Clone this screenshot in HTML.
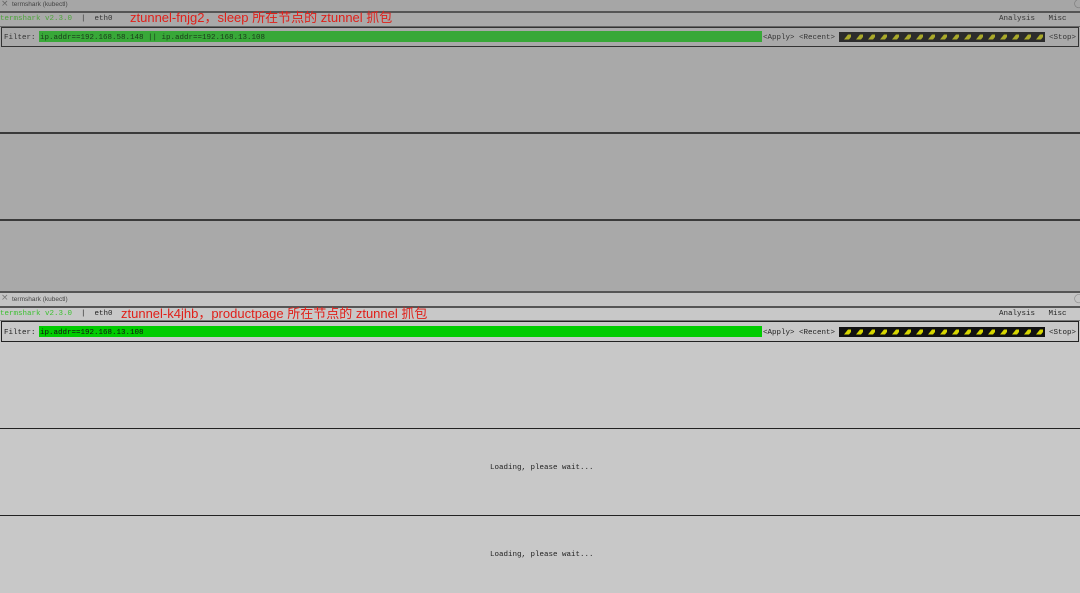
<!DOCTYPE html>
<html><head><meta charset="utf-8"><style>
*{margin:0;padding:0;box-sizing:border-box}
body{width:1080px;height:593px;overflow:hidden;position:relative;background:#c8c8c8;font-family:"Liberation Mono",monospace;font-size:8px;color:#222}
.a{position:absolute}
.mono{font-family:"Liberation Mono",monospace;font-size:7.5px;white-space:pre;line-height:10px}
.cn{font-family:"Liberation Sans","Noto Sans CJK SC",sans-serif;font-size:13px;color:#e0201a;white-space:pre}
.hl{position:absolute;left:0;width:1080px;height:2px}
.ttl{font-family:"Liberation Sans",sans-serif;font-size:6.5px;color:#444;white-space:pre}
</style></head><body>
<div class="a" style="left:0;top:0;width:1080px;height:293px;background:#a9a9a9"></div>
<div class="a" style="left:0;top:0;width:1080px;height:11px;background:#a6a6a6"></div>
<div class="a" style="left:1px;top:-1px;font-size:9px;color:#666;font-family:'DejaVu Sans',sans-serif">×</div>
<div class="a ttl" style="left:12px;top:1px">termshark (kubectl)</div>
<div class="a" style="right:-4px;top:-1px;font-size:9px;color:#777;font-family:'DejaVu Sans',sans-serif">◯</div>
<div class="hl" style="top:11px;background:#555"></div>
<div class="a mono" style="left:0;top:14px;color:#4da53a">termshark v2.3.0</div>
<div class="a mono" style="left:81px;top:14px;color:#333">|  eth0</div>
<div class="a cn" style="left:130px;top:7px">ztunnel-fnjg2，sleep 所在节点的 ztunnel 抓包</div>
<div class="a mono" style="left:999px;top:14px;color:#333">Analysis   Misc</div>
<div class="hl" style="top:26px;height:1px;background:#666"></div>
<div class="a" style="left:1px;top:27px;width:1078px;height:20px;border:1px solid #333"></div>
<div class="a mono" style="left:4px;top:33px;color:#333">Filter:</div>
<div class="a" style="left:39px;top:31px;width:723px;height:11px;background:#38a838"></div>
<div class="a mono" style="left:40px;top:33px;color:#1a3a1a">ip.addr==192.168.58.148 || ip.addr==192.168.13.108</div>
<div class="a mono" style="left:763px;top:33px;color:#333">&lt;Apply&gt; &lt;Recent&gt;</div>
<svg class="a" style="left:839px;top:32px" width="206" height="10"><defs><pattern id="p1" width="12" height="10" patternUnits="userSpaceOnUse"><polygon points="5,7.5 9,2.5 14,2.5 10,7.5" fill="#a9a92a"/></pattern></defs><rect width="206" height="10" fill="#2c2c2c"/><rect width="206" height="10" fill="url(#p1)"/></svg>
<div class="a mono" style="left:1049px;top:33px;color:#333">&lt;Stop&gt;</div>
<div class="hl" style="top:132px;background:#3a3a3a"></div>
<div class="hl" style="top:219px;background:#3a3a3a"></div>
<div class="hl" style="top:291px;height:2px;background:#555"></div>
<div class="a" style="left:0;top:293px;width:1080px;height:13px;background:#c4c4c4"></div>
<div class="a" style="left:1px;top:293px;font-size:9px;color:#777;font-family:'DejaVu Sans',sans-serif">×</div>
<div class="a ttl" style="left:12px;top:296px">termshark (kubectl)</div>
<div class="a" style="right:-4px;top:294px;font-size:9px;color:#888;font-family:'DejaVu Sans',sans-serif">◯</div>
<div class="hl" style="top:306px;background:#555"></div>
<div class="a mono" style="left:0;top:309px;color:#3cc030">termshark v2.3.0</div>
<div class="a mono" style="left:81px;top:309px;color:#222">|  eth0</div>
<div class="a cn" style="left:121px;top:303px">ztunnel-k4jhb，productpage 所在节点的 ztunnel 抓包</div>
<div class="a mono" style="left:999px;top:309px;color:#222">Analysis   Misc</div>
<div class="hl" style="top:320px;height:1px;background:#777"></div>
<div class="a" style="left:1px;top:321px;width:1078px;height:21px;border:1px solid #222"></div>
<div class="a mono" style="left:4px;top:328px;color:#222">Filter:</div>
<div class="a" style="left:39px;top:326px;width:723px;height:11px;background:#00cc00"></div>
<div class="a mono" style="left:40px;top:328px;color:#111">ip.addr==192.168.13.108</div>
<div class="a mono" style="left:763px;top:328px;color:#222">&lt;Apply&gt; &lt;Recent&gt;</div>
<svg class="a" style="left:839px;top:327px" width="206" height="10"><defs><pattern id="p2" width="12" height="10" patternUnits="userSpaceOnUse"><polygon points="5,7.5 9,2.5 14,2.5 10,7.5" fill="#d6d600"/></pattern></defs><rect width="206" height="10" fill="#111"/><rect width="206" height="10" fill="url(#p2)"/></svg>
<div class="a mono" style="left:1049px;top:328px;color:#222">&lt;Stop&gt;</div>
<div class="hl" style="top:428px;height:1px;background:#222"></div>
<div class="a mono" style="left:490px;top:463px;color:#222">Loading, please wait...</div>
<div class="hl" style="top:515px;height:1px;background:#222"></div>
<div class="a mono" style="left:490px;top:550px;color:#222">Loading, please wait...</div>
</body></html>
